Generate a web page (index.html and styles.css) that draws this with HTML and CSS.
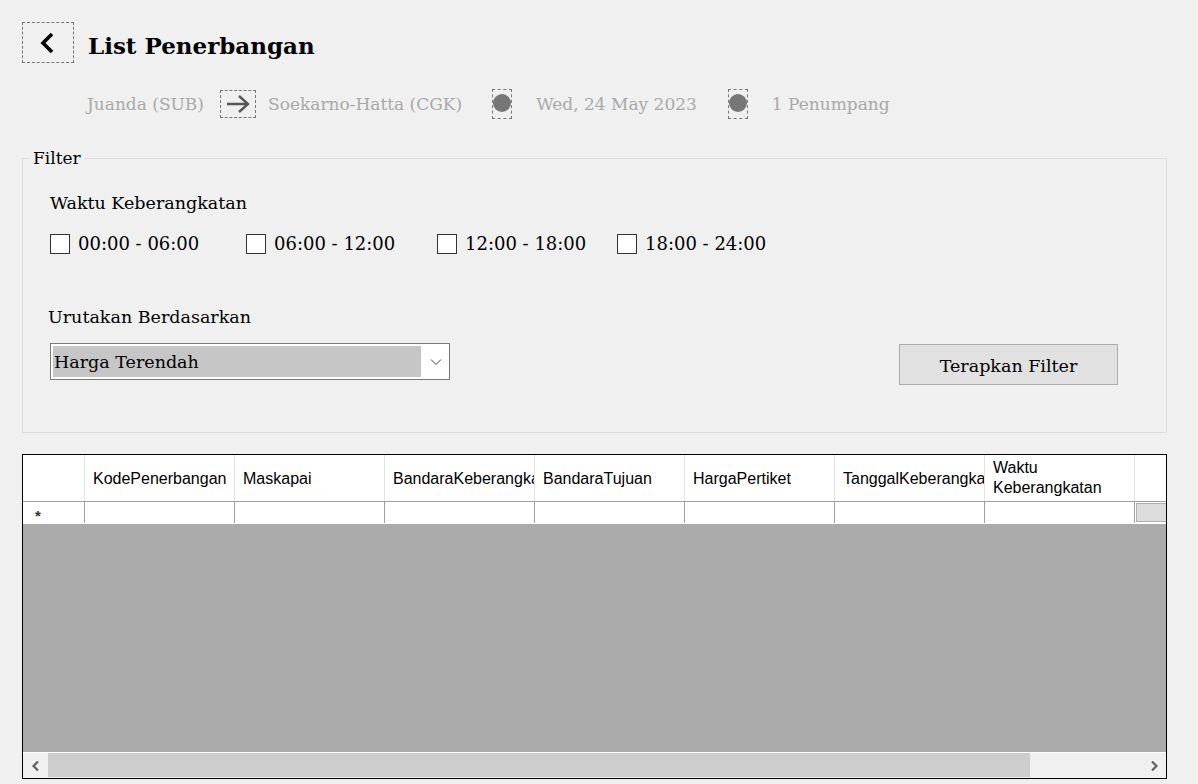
FILE: index.html
```html
<!DOCTYPE html>
<html>
<head>
<meta charset="utf-8">
<link rel="stylesheet" href="styles.css">
</head>
<body>
<div class="page">
  <div class="header">
    <div class="back-btn">
      <svg width="16" height="22" viewBox="0 0 16 22"><path d="M13 2 L4 11 L13 20" fill="none" stroke="#000" stroke-width="3.6"/></svg>
    </div>
    <h1 class="title">List Penerbangan</h1>
  </div>

  <div class="route">
    <span class="route-text">Juanda (SUB)</span>
    <span class="arrow-box">
      <svg width="26" height="20" viewBox="0 0 26 20"><path d="M2 10 H23 M14 2 L23 10 L14 18" fill="none" stroke="#555" stroke-width="2.4"/></svg>
    </span>
    <span class="route-text">Soekarno-Hatta (CGK)</span>
    <span class="dot-box"><span class="dot"></span></span>
    <span class="route-text">Wed, 24 May 2023</span>
    <span class="dot-box"><span class="dot"></span></span>
    <span class="route-text">1 Penumpang</span>
  </div>

  <fieldset class="filter">
    <legend>Filter</legend>
    <div class="label waktu">Waktu Keberangkatan</div>
    <div class="checks">
      <label class="check"><span class="box"></span>00:00 - 06:00</label>
      <label class="check"><span class="box"></span>06:00 - 12:00</label>
      <label class="check"><span class="box"></span>12:00 - 18:00</label>
      <label class="check"><span class="box"></span>18:00 - 24:00</label>
    </div>
    <div class="label urut">Urutakan Berdasarkan</div>
    <div class="sort-row">
      <div class="select">
        <span class="select-value">Harga Terendah</span>
        <svg class="select-arrow" width="12" height="8" viewBox="0 0 12 8"><path d="M1 1.5 L6 6.5 L11 1.5" fill="none" stroke="#444" stroke-width="1"/></svg>
      </div>
      <div class="apply-btn">Terapkan Filter</div>
    </div>
  </fieldset>

  <div class="grid">
    <div class="grid-head">
      <div class="rh"></div>
      <div class="hc"><span>KodePenerbangan</span></div>
      <div class="hc"><span>Maskapai</span></div>
      <div class="hc"><span>BandaraKeberangkatan</span></div>
      <div class="hc"><span>BandaraTujuan</span></div>
      <div class="hc"><span>HargaPertiket</span></div>
      <div class="hc"><span>TanggalKeberangkatan</span></div>
      <div class="hc wrap"><span>Waktu Keberangkatan</span></div>
      <div class="hc last"></div>
    </div>
    <div class="grid-row">
      <div class="rh star">*</div>
      <div class="dc"></div>
      <div class="dc"></div>
      <div class="dc"></div>
      <div class="dc"></div>
      <div class="dc"></div>
      <div class="dc"></div>
      <div class="dc"></div>
      <div class="dc last"><span class="mini"></span></div>
    </div>
    <div class="grid-empty"></div>
    <div class="hscroll">
      <span class="sarrow">
        <svg width="10" height="12" viewBox="0 0 10 12"><path d="M7 1.5 L2.5 6 L7 10.5" fill="none" stroke="#606060" stroke-width="2.2"/></svg>
      </span>
      <div class="track"><div class="thumb"></div></div>
      <span class="sarrow">
        <svg width="10" height="12" viewBox="0 0 10 12"><path d="M3 1.5 L7.5 6 L3 10.5" fill="none" stroke="#606060" stroke-width="2.2"/></svg>
      </span>
    </div>
  </div>
</div>
</body>
</html>
```

FILE: styles.css
```css
* { box-sizing: border-box; }
html, body { margin: 0; padding: 0; }
body {
  background: #f0f0f0;
  font-family: "DejaVu Serif", "Liberation Serif", serif;
  color: #000;
  width: 1198px;
  height: 784px;
  overflow: hidden;
}
.page { padding: 22px 0 0 22px; }

.header { display: flex; align-items: center; }
.back-btn {
  width: 52px; height: 41px;
  border: 1px dashed #777;
  display: flex; align-items: center; justify-content: center;
  padding-right: 2px;
}
.title {
  margin: 0 0 0 14px;
  padding-top: 5px;
  font-size: 23px;
  font-weight: bold;
}

.route {
  display: flex; align-items: center;
  margin-top: 26px;
  padding-left: 65px;
  height: 30px;
}
.route-text { color: #a9a9a9; font-size: 17px; }
.arrow-box {
  width: 36px; height: 28px;
  border: 1px dashed #777;
  display: flex; align-items: center; justify-content: center;
  margin: 0 12px 0 16px;
}
.dot-box {
  width: 20px; height: 30px;
  border: 1px dashed #777;
  display: flex; align-items: flex-start; justify-content: center;
  padding-top: 4px;
  margin: 0 24px 0 30px;
}
.dot-box + .route-text + .dot-box { margin-left: 31px; }
.dot { width: 18px; height: 18px; border-radius: 50%; background: #767676; display: block; flex: none; }

.filter {
  margin: 29px 0 0 0;
  width: 1145px;
  height: 285px;
  border: 1px solid #dcdcdc;
  padding: 0;
}
.filter legend {
  margin-left: 6px;
  padding: 0 4px;
  font-size: 17px;
}
.label { font-size: 17.5px; }
.waktu { margin: 25px 0 0 27px; }
.checks { display: flex; margin: 20px 0 0 27px; }
.check { display: flex; align-items: center; font-size: 18px; }
.check .box {
  width: 20px; height: 20px;
  border: 1px solid #333;
  background: #fff;
  margin-right: 8px;
}
.check:nth-child(1) { width: 196px; }
.check:nth-child(2) { width: 191px; }
.check:nth-child(3) { width: 180px; }

.urut { margin: 53px 0 0 25px; }
.sort-row { display: flex; align-items: flex-start; margin: 16px 0 0 27px; }
.select {
  width: 400px; height: 37px;
  border: 1px solid #7a7a7a;
  background: #fff;
  padding: 2px;
  display: flex; align-items: center;
}
.select-value {
  background: #c6c6c6;
  width: 368px; height: 31px;
  font-size: 17.5px;
  display: flex; align-items: center;
  padding-left: 1px;
}
.select-arrow { margin-left: 9px; }
.apply-btn {
  margin-left: 449px;
  margin-top: 1px;
  width: 219px; height: 41px;
  background: #e1e1e1;
  border: 1px solid #adadad;
  display: flex; align-items: center; justify-content: center;
  font-size: 17.5px;
  padding-top: 3px;
}

.grid {
  margin-top: 21px;
  width: 1145px;
  height: 325px;
  border: 1px solid #000;
  background: #ababab;
  display: flex; flex-direction: column;
  font-family: "Liberation Sans", Arial, sans-serif;
  font-size: 16px;
}
.grid-head, .grid-row { display: flex; background: #fff; }
.grid-head { height: 47px; border-bottom: 1px solid #a0a0a0; }
.grid-row { height: 22px; border-bottom: 1px solid #fff; }
.rh { width: 62px; flex: none; border-right: 1px solid #a0a0a0; }
.grid-head .rh { border-right: 1px solid #e3e3e3; }
.hc {
  width: 150px; flex: none;
  border-right: 1px solid #e3e3e3;
  padding: 1px 0 0 8px;
  display: flex; align-items: center;
  white-space: nowrap; overflow: hidden;
  line-height: 20px;
}
.hc span { display: block; overflow: hidden; max-width: 141px; }
.hc.wrap { white-space: normal; padding-top: 0; }
.hc.last, .dc.last { flex: 1; width: auto; border-right: none; }
.dc { width: 150px; flex: none; border-right: 1px solid #a0a0a0; }
.star {
  font-size: 15px; font-weight: bold; color: #333;
  padding-left: 12px; padding-top: 4px;
  line-height: 20px;
}
.dc.last { padding: 1px 0 0 1px; }
.mini { display: block; width: 100%; height: 19px; background: #dcdcdc; border: 1px solid #b0b0b0; border-right: none; }

.grid-empty { flex: 1; }
.hscroll {
  height: 26px;
  border-top: 1px solid #fff;
  background: #f0f0f0;
  display: flex; align-items: stretch;
}
.sarrow { width: 25px; flex: none; display: flex; align-items: center; justify-content: center; }
.track { flex: 1; display: flex; }
.thumb { width: 982px; background: #cdcdcd; margin-bottom: 1px; }
```
